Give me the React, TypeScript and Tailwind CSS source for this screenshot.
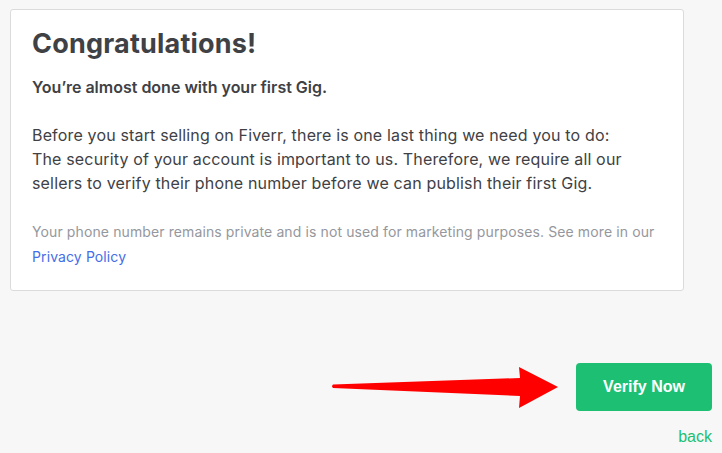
import React from "react";

function RedArrow() {
  return (
    <svg width="232" height="48" viewBox="0 0 232 48" className="shrink-0">
      <path
        d="M2 21.5 L189 15 L188 4 L227 24 L188 45 L189 33 L2 25 Q0 23.3 2 21.5 Z"
        fill="#ff0000"
      />
    </svg>
  );
}

export default function App() {
  return (
    <div
      className="min-h-[453px] w-full bg-[#f7f7f7] pt-[9px] pl-[10px] pr-[10px]"
      style={{ fontFamily: "Inter, 'Liberation Sans', sans-serif" }}
    >
      <div className="w-[674px] rounded-[3px] border border-[#dadbdd] bg-white pl-[21px] pr-4 pt-[17px] pb-[21px]">
        <h1 className="text-[27px] font-bold leading-[34px] tracking-[0.2px] text-[#404145]">
          Congratulations!
        </h1>
        <p className="mt-[14px] text-base font-semibold leading-6 text-[#404145]">
          You’re almost done with your first Gig.
        </p>
        <p className="mt-6 text-base leading-6 tracking-[0.16px] text-[#404145]">
          Before you start selling on Fiverr, there is one last thing we need
          you to do:
          <br />
          The security of your account is important to us. Therefore, we
          require all our
          <br />
          sellers to verify their phone number before we can publish their
          first Gig.
        </p>
        <p className="mt-[24px] text-sm leading-[25px] tracking-[0.11px] text-[#95979d]">
          Your phone number remains private and is not used for marketing
          purposes. See more in our
          <br />
          <a href="#" className="text-[#446ee7]">
            Privacy Policy
          </a>
        </p>
      </div>

      <div className="mt-[72px] flex items-center justify-end">
        <RedArrow />
        <button
          className="ml-[13px] h-12 w-[136px] rounded-[4px] bg-[#1dbf73] text-base font-bold text-white"
          style={{ fontFamily: "'Liberation Sans', Arial, sans-serif" }}
        >
          Verify Now
        </button>
      </div>
      <div className="mt-[16px] flex justify-end">
        <a
          href="#"
          className="text-base leading-5 text-[#1dbf73]"
          style={{ fontFamily: "'Liberation Sans', Arial, sans-serif" }}
        >
          back
        </a>
      </div>
    </div>
  );
}
